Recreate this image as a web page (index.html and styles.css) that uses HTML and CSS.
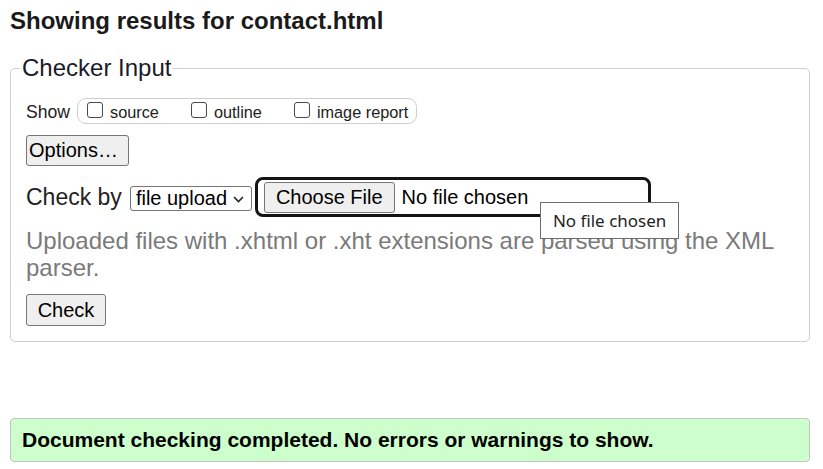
FILE: index.html
```html
<!DOCTYPE html>
<html lang="en">
<head>
<meta charset="utf-8">
<title>Showing results for contact.html</title>
<link rel="stylesheet" href="styles.css">
</head>
<body>
<main class="page">
  <h2 class="title">Showing results for contact.html</h2>
  <fieldset class="checker">
    <legend class="legend">Checker Input</legend>
    <div class="show-row">
      <span class="show-label">Show</span>
      <div class="pill">
        <label class="opt"><input type="checkbox" class="cb"><span>source</span></label>
        <label class="opt"><input type="checkbox" class="cb"><span>outline</span></label>
        <label class="opt"><input type="checkbox" class="cb"><span>image report</span></label>
      </div>
    </div>
    <button class="btn btn-options" type="button">Options…</button>
    <div class="checkby-row">
      <span class="checkby-label">Check by</span>
      <div class="select-wrap">
        <select class="select"><option>file upload</option></select>
        <svg class="chev" width="11" height="7" viewBox="0 0 11 7"><path d="M1 1 L5.5 5.5 L10 1" fill="none" stroke="#222" stroke-width="1.6"/></svg>
      </div>
      <div class="file-box">
        <button class="btn btn-file" type="button">Choose File</button>
        <span class="file-name">No file chosen</span>
        <div class="tooltip">No file chosen</div>
      </div>
    </div>
    <p class="help">Uploaded files with .xhtml or .xht extensions are parsed using the XML parser.</p>
    <button class="btn btn-check" type="button">Check</button>
  </fieldset>
  <div class="success">Document checking completed. No errors or warnings to show.</div>
</main>
</body>
</html>
```
FILE: styles.css
```css
html, body {
  margin: 0;
  padding: 0;
  background: #fff;
}
body {
  font-family: "Liberation Sans", Arial, sans-serif;
  color: #222;
}
.page {
  width: 800px;
  margin-left: 10px;
}
.title {
  margin: 0;
  padding-top: 7px;
  font-size: 24px;
  line-height: 28px;
  font-weight: bold;
  color: #1a1a1a;
}
.checker {
  margin: 19px 0 0 0;
  padding: 0 15px 15px 15px;
  border: 1px solid #cfcfcf;
  border-radius: 5px;
  min-width: 0;
}
.legend {
  font-size: 24px;
  line-height: 28px;
  padding: 0 2px;
  margin-left: -6px;
  color: #1a1a2a;
}
.show-row {
  display: flex;
  align-items: center;
  height: 26px;
  margin-top: 16px;
}
.show-label {
  font-size: 17.6px;
  margin-right: 7px;
  padding-top: 2px;
}
.pill {
  box-sizing: border-box;
  height: 26px;
  display: flex;
  align-items: center;
  gap: 32px;
  padding: 0 8px 0 9px;
  border: 1px solid #cfcfcf;
  border-radius: 9px;
}
.opt {
  display: flex;
  align-items: center;
  gap: 7px;
  font-size: 16.3px;
  padding-top: 3px;
}
.cb {
  appearance: none;
  -webkit-appearance: none;
  box-sizing: border-box;
  width: 16px;
  height: 16px;
  margin: 0 0 6px 0;
  border: 1px solid #4a4a4a;
  border-radius: 3px;
  background: #fff;
}
.btn {
  box-sizing: border-box;
  font-family: "Liberation Sans", Arial, sans-serif;
  font-size: 20px;
  color: #000;
  background: #efefef;
  border: 1px solid #767676;
  border-radius: 3px;
  margin: 0;
  display: block;
}
.btn-options {
  width: 103px;
  height: 31px;
  padding: 0 0 0 2px;
  text-align: left;
  margin-top: 11px;
}
.checkby-row {
  display: flex;
  align-items: center;
  height: 40px;
  margin-top: 11px;
}
.checkby-label {
  font-size: 23px;
  margin-right: 8px;
  padding-top: 1px;
}
.select-wrap {
  position: relative;
  margin-right: 3px;
  margin-top: 2px;
}
.select {
  appearance: none;
  -webkit-appearance: none;
  box-sizing: border-box;
  width: 122px;
  height: 25px;
  padding: 0 0 0 5px;
  font-family: "Liberation Sans", Arial, sans-serif;
  font-size: 20px;
  color: #000;
  background: #fff;
  border: 1px solid #767676;
  border-radius: 3px;
  display: block;
}
.chev {
  position: absolute;
  right: 8px;
  top: 10px;
  pointer-events: none;
}
.file-box {
  position: relative;
  box-sizing: border-box;
  width: 396px;
  height: 40px;
  display: flex;
  align-items: center;
  padding: 1px 6px 0 6px;
  border: 3px solid #141414;
  border-radius: 8px;
}
.btn-file {
  height: 31px;
  padding: 0 11px;
}
.file-name {
  font-size: 20px;
  color: #000;
  margin-left: 7px;
}
.tooltip {
  position: absolute;
  left: 282px;
  top: 22px;
  box-sizing: border-box;
  height: 37px;
  padding: 0 12px;
  line-height: 35px;
  font-family: "Noto Sans", "Open Sans", sans-serif;
  font-size: 17px;
  color: #222;
  background: #fff;
  border: 1px solid #6e6e6e;
  white-space: nowrap;
}
.help {
  margin: 10px 0 0 0;
  font-size: 24px;
  line-height: 27px;
  color: #7a7a7a;
}
.btn-check {
  width: 80px;
  height: 32px;
  padding: 0;
  margin-top: 13px;
}
.success {
  box-sizing: border-box;
  margin-top: 76px;
  height: 44px;
  padding: 0 11px;
  line-height: 42px;
  font-size: 21px;
  font-weight: bold;
  color: #000;
  background: #ccffcc;
  border: 1px solid #c4c4c4;
  border-radius: 4px;
}
```
